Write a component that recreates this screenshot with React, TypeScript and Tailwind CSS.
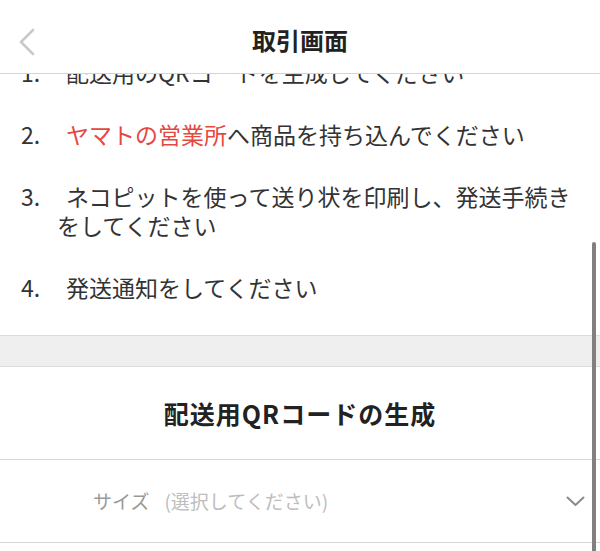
import { ReactNode } from "react"

const steps: { n: string; body: ReactNode }[] = [
  { n: "1.", body: "配送用のQRコードを生成してください" },
  {
    n: "2.",
    body: (
      <>
        <span className="text-[#e5483f]">ヤマトの営業所</span>へ商品を持ち込んでください
      </>
    ),
  },
  { n: "3.", body: "ネコピットを使って送り状を印刷し、発送手続きをしてください" },
  { n: "4.", body: "発送通知をしてください" },
]

export default function App() {
  return (
    <div
      className="relative w-[600px] h-[551px] overflow-hidden bg-white text-[#333]"
      style={{ fontFamily: '"Noto Sans CJK JP", "Noto Sans", sans-serif' }}
    >
      {/* header */}
      <div className="relative z-10 h-[74px] flex items-center justify-center border-b border-[#d4d4d4] bg-white">
        <div className="absolute left-[18px] top-[28px]">
          <svg width="18" height="28" viewBox="0 0 18 28" fill="none">
            <path d="M15 2 L3 14 L15 26" stroke="#c9c9c9" strokeWidth="2.6" strokeLinecap="round" strokeLinejoin="round" />
          </svg>
        </div>
        <h1 className="text-[24px] font-bold text-[#222] leading-none mt-[6px]">取引画面</h1>
      </div>

      {/* steps list, scrolled */}
      <div className="overflow-hidden">
        <ol className="-mt-[16px] pb-[33px] flex flex-col gap-[33px] pl-[21px] pr-[14px] text-[23px] leading-[29px]">
          {steps.map((s) => (
            <li key={s.n} className="flex">
              <span className="w-[36px] shrink-0">{s.n}</span>
              <span className="indent-[9px]">{s.body}</span>
            </li>
          ))}
        </ol>
      </div>

      {/* gray band */}
      <div className="h-[32px] bg-[#efefef] border-y border-[#dcdcdc]" />

      {/* QR section title */}
      <div className="h-[93px] flex items-center justify-center border-b border-[#d6d6d6]">
        <h2 className="text-[25px] font-bold text-[#222] tracking-[1px] leading-none">配送用QRコードの生成</h2>
      </div>

      {/* select row */}
      <div className="h-[83px] flex items-center border-b border-[#d6d6d6] pl-[93px] pr-[15px]">
        <span className="text-[19px] text-[#9a9a9a]">サイズ</span>
        <span className="ml-[15px] text-[19px] text-[#bdbdbd]">(選択してください)</span>
        <svg className="ml-auto" width="19" height="11" viewBox="0 0 19 11" fill="none">
          <path d="M1.5 1.5 L9.5 9 L17.5 1.5" stroke="#8a8a8a" strokeWidth="2" strokeLinecap="round" strokeLinejoin="round" />
        </svg>
      </div>

      {/* scrollbar */}
      <div className="absolute left-[592px] top-[242px] w-[4px] h-[320px] rounded-full bg-[#808080]" />
    </div>
  )
}
